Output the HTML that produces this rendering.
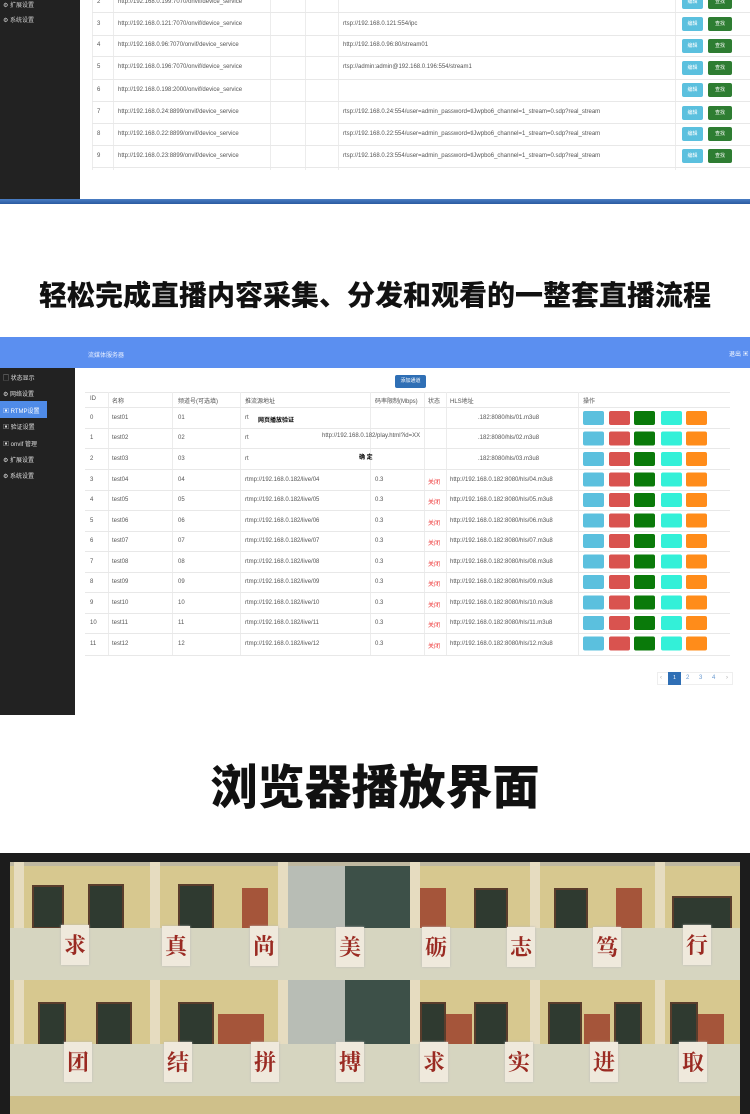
<!DOCTYPE html>
<html><head><meta charset="utf-8"><style>
*{margin:0;padding:0;box-sizing:border-box}
body{width:750px;height:1114px;overflow:hidden;background:#fff;font-family:"Liberation Sans","Noto Sans CJK SC",sans-serif;position:relative}
.a{position:absolute}
.t{position:absolute;font-size:6px;color:#555;white-space:nowrap}
.hl{position:absolute;height:1px;background:#e8e8e8}
.vl{position:absolute;width:1px;background:#ececec}
.b{position:absolute;height:14px;border-radius:2px;font-size:5px;color:#fff;text-align:center;line-height:14px}
h2{position:absolute;left:0;width:750px;text-align:center;font-family:"Liberation Sans","Noto Sans CJK SC",sans-serif;font-weight:900;color:#111}
.ch{position:absolute;width:28px;height:40px;background:#efe9dc;color:#9a2a22;font-size:22px;font-weight:bold;text-align:center;line-height:40px;font-family:"Noto Serif CJK SC",serif;box-shadow:0 0 2px #bbb}
.win{position:absolute;background:#2f3a30;border:2px solid #5a3d2c}
.door{position:absolute;background:#a5553a}
.pil{position:absolute;width:10px;background:#e6dcc0}
</style></head><body>
<!-- Section 1 -->
<div class="a" style="left:0;top:0;width:80px;height:200px;background:#222"></div>
<div class="t" style="left:3px;top:0;color:#ccc">⚙ 扩展设置</div>
<div class="t" style="left:3px;top:15px;color:#ccc">⚙ 系统设置</div>
<div class="vl" style="left:92px;top:0;height:170px"></div>
<div class="vl" style="left:113px;top:0;height:170px"></div>
<div class="vl" style="left:270px;top:0;height:170px"></div>
<div class="vl" style="left:305px;top:0;height:170px"></div>
<div class="vl" style="left:338px;top:0;height:170px"></div>
<div class="vl" style="left:675px;top:0;height:170px"></div>
<div class="hl" style="left:92px;width:658px;top:12px"></div>
<div class="hl" style="left:92px;width:658px;top:35px"></div>
<div class="hl" style="left:92px;width:658px;top:56px"></div>
<div class="hl" style="left:92px;width:658px;top:79px"></div>
<div class="hl" style="left:92px;width:658px;top:101px"></div>
<div class="hl" style="left:92px;width:658px;top:123px"></div>
<div class="hl" style="left:92px;width:658px;top:145px"></div>
<div class="hl" style="left:92px;width:658px;top:167px"></div>

<div class="t" style="left:97px;top:-1px">2</div><div class="t" style="left:118px;top:-1px">http://192.168.0.199:7070/onvif/device_service</div>
<div class="t" style="left:97px;top:21px">3</div><div class="t" style="left:118px;top:21px">http://192.168.0.121:7070/onvif/device_service</div><div class="t" style="left:343px;top:21px">rtsp://192.168.0.121:554/ipc</div>
<div class="t" style="left:97px;top:42px">4</div><div class="t" style="left:118px;top:42px">http://192.168.0.96:7070/onvif/device_service</div><div class="t" style="left:343px;top:42px">http://192.168.0.96:80/stream01</div>
<div class="t" style="left:97px;top:64px">5</div><div class="t" style="left:118px;top:64px">http://192.168.0.196:7070/onvif/device_service</div><div class="t" style="left:343px;top:64px">rtsp://admin:admin@192.168.0.196:554/stream1</div>
<div class="t" style="left:97px;top:87px">6</div><div class="t" style="left:118px;top:87px">http://192.168.0.198:2000/onvif/device_service</div>
<div class="t" style="left:97px;top:109px">7</div><div class="t" style="left:118px;top:109px">http://192.168.0.24:8899/onvif/device_service</div><div class="t" style="left:343px;top:109px">rtsp://192.168.0.24:554/user=admin_password=tlJwpbo6_channel=1_stream=0.sdp?real_stream</div>
<div class="t" style="left:97px;top:131px">8</div><div class="t" style="left:118px;top:131px">http://192.168.0.22:8899/onvif/device_service</div><div class="t" style="left:343px;top:131px">rtsp://192.168.0.22:554/user=admin_password=tlJwpbo6_channel=1_stream=0.sdp?real_stream</div>
<div class="t" style="left:97px;top:153px">9</div><div class="t" style="left:118px;top:153px">http://192.168.0.23:8899/onvif/device_service</div><div class="t" style="left:343px;top:153px">rtsp://192.168.0.23:554/user=admin_password=tlJwpbo6_channel=1_stream=0.sdp?real_stream</div>

<div class="b" style="left:682px;top:-5px;width:21px;background:#5bc0de">编辑</div><div class="b" style="left:708px;top:-5px;width:24px;background:#2e7d32">查找</div>
<div class="b" style="left:682px;top:17px;width:21px;background:#5bc0de">编辑</div><div class="b" style="left:708px;top:17px;width:24px;background:#2e7d32">查找</div>
<div class="b" style="left:682px;top:39px;width:21px;background:#5bc0de">编辑</div><div class="b" style="left:708px;top:39px;width:24px;background:#2e7d32">查找</div>
<div class="b" style="left:682px;top:61px;width:21px;background:#5bc0de">编辑</div><div class="b" style="left:708px;top:61px;width:24px;background:#2e7d32">查找</div>
<div class="b" style="left:682px;top:83px;width:21px;background:#5bc0de">编辑</div><div class="b" style="left:708px;top:83px;width:24px;background:#2e7d32">查找</div>
<div class="b" style="left:682px;top:106px;width:21px;background:#5bc0de">编辑</div><div class="b" style="left:708px;top:106px;width:24px;background:#2e7d32">查找</div>
<div class="b" style="left:682px;top:127px;width:21px;background:#5bc0de">编辑</div><div class="b" style="left:708px;top:127px;width:24px;background:#2e7d32">查找</div>
<div class="b" style="left:682px;top:149px;width:21px;background:#5bc0de">编辑</div><div class="b" style="left:708px;top:149px;width:24px;background:#2e7d32">查找</div>
<div class="a" style="left:0;top:199px;width:750px;height:5px;background:linear-gradient(#4a7ec4,#2a5aa0)"></div>

<h2 style="top:278px;font-size:28px;line-height:36px">轻松完成直播内容采集、分发和观看的一整套直播流程</h2>

<!-- Section 2 -->
<div class="a" style="left:0;top:337px;width:750px;height:31px;background:#5b8ff0"></div>
<div class="t" style="left:88px;top:350px;color:#e8efff">流媒体服务器</div>
<div class="t" style="left:729px;top:349px;color:#fff">退出 ▣</div>
<div class="a" style="left:0;top:368px;width:75px;height:347px;background:#222"></div>
<div class="a" style="left:0;top:401px;width:47px;height:17px;background:#4f8be8"></div>
<div class="t" style="left:3px;top:373px;color:#ddd">▢ 状态显示</div>
<div class="t" style="left:3px;top:389px;color:#ddd">⚙ 网络设置</div>
<div class="t" style="left:3px;top:406px;color:#fff">▣ RTMP设置</div>
<div class="t" style="left:3px;top:422px;color:#ddd">▣ 验证设置</div>
<div class="t" style="left:3px;top:439px;color:#ddd">▣ onvif 管理</div>
<div class="t" style="left:3px;top:455px;color:#ddd">⚙ 扩展设置</div>
<div class="t" style="left:3px;top:471px;color:#ddd">⚙ 系统设置</div>
<div class="b" style="left:395px;top:375px;width:31px;height:13px;line-height:13px;background:#2f6fb5">添加通道</div>
<div class="hl" style="left:85px;width:645px;top:392px"></div>
<div class="t" style="left:90px;top:396px">ID</div><div class="t" style="left:112px;top:396px">名称</div><div class="t" style="left:178px;top:396px">频道号(可选填)</div><div class="t" style="left:245px;top:396px">推流源地址</div><div class="t" style="left:375px;top:396px">码率限制(Mbps)</div><div class="t" style="left:428px;top:396px">状态</div><div class="t" style="left:450px;top:396px">HLS地址</div><div class="t" style="left:583px;top:396px">操作</div>
<div class="vl" style="left:108px;top:392px;height:264px"></div>
<div class="vl" style="left:172px;top:392px;height:264px"></div>
<div class="vl" style="left:240px;top:392px;height:264px"></div>
<div class="vl" style="left:370px;top:392px;height:264px"></div>
<div class="vl" style="left:424px;top:392px;height:264px"></div>
<div class="vl" style="left:446px;top:392px;height:264px"></div>
<div class="vl" style="left:578px;top:392px;height:264px"></div>

<div class="hl" style="left:85px;width:645px;top:407px"></div>
<div class="t" style="left:90px;top:415px">0</div><div class="t" style="left:112px;top:415px">test01</div><div class="t" style="left:178px;top:415px">01</div><div class="t" style="left:245px;top:415px">rt</div><div class="t" style="left:258px;top:415px;color:#000;font-weight:bold">网页播放验证</div><div class="t" style="left:478px;top:415px">.182:8080/hls/01.m3u8</div>
<div class="hl" style="left:85px;width:645px;top:428px"></div>
<div class="t" style="left:90px;top:435px">1</div><div class="t" style="left:112px;top:435px">test02</div><div class="t" style="left:178px;top:435px">02</div><div class="t" style="left:245px;top:435px">rt</div><div class="t" style="left:322px;top:433px">http://192.168.0.182/play.html?id=XX</div><div class="t" style="left:478px;top:435px">.182:8080/hls/02.m3u8</div>
<div class="hl" style="left:85px;width:645px;top:448px"></div>
<div class="t" style="left:90px;top:456px">2</div><div class="t" style="left:112px;top:456px">test03</div><div class="t" style="left:178px;top:456px">03</div><div class="t" style="left:245px;top:456px">rt</div><div class="t" style="left:359px;top:452px;color:#000;font-weight:bold">确 定</div><div class="t" style="left:478px;top:456px">.182:8080/hls/03.m3u8</div>
<div class="hl" style="left:85px;width:645px;top:469px"></div>

<div class="t" style="left:90px;top:477px">3</div><div class="t" style="left:112px;top:477px">test04</div><div class="t" style="left:178px;top:477px">04</div><div class="t" style="left:245px;top:477px">rtmp://192.168.0.182/live/04</div><div class="t" style="left:375px;top:477px">0.3</div><div class="t" style="left:428px;top:477px;color:#e33">关闭</div><div class="t" style="left:450px;top:477px">http://192.168.0.182:8080/hls/04.m3u8</div>
<div class="hl" style="left:85px;width:645px;top:490px"></div>
<div class="t" style="left:90px;top:497px">4</div><div class="t" style="left:112px;top:497px">test05</div><div class="t" style="left:178px;top:497px">05</div><div class="t" style="left:245px;top:497px">rtmp://192.168.0.182/live/05</div><div class="t" style="left:375px;top:497px">0.3</div><div class="t" style="left:428px;top:497px;color:#e33">关闭</div><div class="t" style="left:450px;top:497px">http://192.168.0.182:8080/hls/05.m3u8</div>
<div class="hl" style="left:85px;width:645px;top:510px"></div>
<div class="t" style="left:90px;top:518px">5</div><div class="t" style="left:112px;top:518px">test06</div><div class="t" style="left:178px;top:518px">06</div><div class="t" style="left:245px;top:518px">rtmp://192.168.0.182/live/06</div><div class="t" style="left:375px;top:518px">0.3</div><div class="t" style="left:428px;top:518px;color:#e33">关闭</div><div class="t" style="left:450px;top:518px">http://192.168.0.182:8080/hls/06.m3u8</div>
<div class="hl" style="left:85px;width:645px;top:531px"></div>
<div class="t" style="left:90px;top:538px">6</div><div class="t" style="left:112px;top:538px">test07</div><div class="t" style="left:178px;top:538px">07</div><div class="t" style="left:245px;top:538px">rtmp://192.168.0.182/live/07</div><div class="t" style="left:375px;top:538px">0.3</div><div class="t" style="left:428px;top:538px;color:#e33">关闭</div><div class="t" style="left:450px;top:538px">http://192.168.0.182:8080/hls/07.m3u8</div>
<div class="hl" style="left:85px;width:645px;top:551px"></div>
<div class="t" style="left:90px;top:559px">7</div><div class="t" style="left:112px;top:559px">test08</div><div class="t" style="left:178px;top:559px">08</div><div class="t" style="left:245px;top:559px">rtmp://192.168.0.182/live/08</div><div class="t" style="left:375px;top:559px">0.3</div><div class="t" style="left:428px;top:559px;color:#e33">关闭</div><div class="t" style="left:450px;top:559px">http://192.168.0.182:8080/hls/08.m3u8</div>
<div class="hl" style="left:85px;width:645px;top:572px"></div>
<div class="t" style="left:90px;top:579px">8</div><div class="t" style="left:112px;top:579px">test09</div><div class="t" style="left:178px;top:579px">09</div><div class="t" style="left:245px;top:579px">rtmp://192.168.0.182/live/09</div><div class="t" style="left:375px;top:579px">0.3</div><div class="t" style="left:428px;top:579px;color:#e33">关闭</div><div class="t" style="left:450px;top:579px">http://192.168.0.182:8080/hls/09.m3u8</div>
<div class="hl" style="left:85px;width:645px;top:592px"></div>
<div class="t" style="left:90px;top:600px">9</div><div class="t" style="left:112px;top:600px">test10</div><div class="t" style="left:178px;top:600px">10</div><div class="t" style="left:245px;top:600px">rtmp://192.168.0.182/live/10</div><div class="t" style="left:375px;top:600px">0.3</div><div class="t" style="left:428px;top:600px;color:#e33">关闭</div><div class="t" style="left:450px;top:600px">http://192.168.0.182:8080/hls/10.m3u8</div>
<div class="hl" style="left:85px;width:645px;top:613px"></div>
<div class="t" style="left:90px;top:620px">10</div><div class="t" style="left:112px;top:620px">test11</div><div class="t" style="left:178px;top:620px">11</div><div class="t" style="left:245px;top:620px">rtmp://192.168.0.182/live/11</div><div class="t" style="left:375px;top:620px">0.3</div><div class="t" style="left:428px;top:620px;color:#e33">关闭</div><div class="t" style="left:450px;top:620px">http://192.168.0.182:8080/hls/11.m3u8</div>
<div class="hl" style="left:85px;width:645px;top:633px"></div>
<div class="t" style="left:90px;top:641px">11</div><div class="t" style="left:112px;top:641px">test12</div><div class="t" style="left:178px;top:641px">12</div><div class="t" style="left:245px;top:641px">rtmp://192.168.0.182/live/12</div><div class="t" style="left:375px;top:641px">0.3</div><div class="t" style="left:428px;top:641px;color:#e33">关闭</div><div class="t" style="left:450px;top:641px">http://192.168.0.182:8080/hls/12.m3u8</div>
<div class="hl" style="left:85px;width:645px;top:655px"></div>

<svg class="a" style="left:583px;top:411px" width="125" height="242">
<defs><g id="r">
<rect x="0" y="0" width="21" height="14" rx="2" fill="#5bc0de"/>
<rect x="26" y="0" width="21" height="14" rx="2" fill="#d9534f"/>
<rect x="51" y="0" width="21" height="14" rx="2" fill="#0a7a0a"/>
<rect x="78" y="0" width="21" height="14" rx="2" fill="#33f0d8"/>
<rect x="103" y="0" width="21" height="14" rx="2" fill="#ff8c1a"/>
</g></defs>
<use href="#r" y="0"/><use href="#r" y="20.5"/><use href="#r" y="41"/><use href="#r" y="61.5"/><use href="#r" y="82"/><use href="#r" y="102.5"/><use href="#r" y="123"/><use href="#r" y="143.5"/><use href="#r" y="164"/><use href="#r" y="184.5"/><use href="#r" y="205"/><use href="#r" y="225.5"/>
</svg>
<!-- pagination -->
<div class="a" style="left:657px;top:672px;width:76px;height:13px;border:1px solid #eee"></div>
<div class="b" style="left:668px;top:672px;width:13px;height:13px;line-height:13px;background:#2f6fb5;border-radius:0">1</div>
<div class="t" style="left:660px;top:675px;color:#aaa">‹</div><div class="t" style="left:686px;top:675px;color:#6a9ad0">2</div><div class="t" style="left:699px;top:675px;color:#6a9ad0">3</div><div class="t" style="left:712px;top:675px;color:#6a9ad0">4</div><div class="t" style="left:726px;top:675px;color:#aaa">›</div>

<h2 style="top:760px;font-size:47px;line-height:56px">浏览器播放界面</h2>

<!-- Section 3 photo -->
<div class="a" style="left:0;top:853px;width:750px;height:261px;background:#1c1c1c"></div>
<div class="a" style="left:10px;top:862px;width:730px;height:252px;background:#d7c88f;overflow:hidden">
  <div class="a" style="left:278px;top:0;width:125px;height:252px;background:#b8bdb5"></div>
  <div class="a" style="left:335px;top:0;width:68px;height:252px;background:#3d5048"></div>
  <div class="a" style="left:0;top:0;width:730px;height:4px;background:#bfb8a0"></div>
  <div class="pil" style="left:4px;top:0;height:252px"></div>
  <div class="pil" style="left:140px;top:0;height:252px"></div>
  <div class="pil" style="left:268px;top:0;height:252px"></div>
  <div class="pil" style="left:400px;top:0;height:252px"></div>
  <div class="pil" style="left:520px;top:0;height:252px"></div>
  <div class="pil" style="left:645px;top:0;height:252px"></div>
  <div class="win" style="left:22px;top:23px;width:32px;height:44px"></div>
  <div class="win" style="left:78px;top:22px;width:36px;height:46px"></div>
  <div class="win" style="left:168px;top:22px;width:36px;height:46px"></div>
  <div class="door" style="left:232px;top:26px;width:26px;height:42px"></div>
  <div class="door" style="left:410px;top:26px;width:26px;height:42px"></div>
  <div class="win" style="left:464px;top:26px;width:34px;height:44px"></div>
  <div class="win" style="left:544px;top:26px;width:34px;height:44px"></div>
  <div class="door" style="left:606px;top:26px;width:26px;height:42px"></div>
  <div class="win" style="left:662px;top:34px;width:60px;height:36px"></div>
  <div class="a" style="left:0;top:66px;width:730px;height:52px;background:#d6d5c0"></div>
  <div class="win" style="left:28px;top:140px;width:28px;height:44px"></div>
  <div class="win" style="left:86px;top:140px;width:36px;height:44px"></div>
  <div class="win" style="left:168px;top:140px;width:36px;height:44px"></div>
  <div class="door" style="left:208px;top:152px;width:46px;height:34px"></div>
  <div class="win" style="left:410px;top:140px;width:26px;height:44px"></div>
  <div class="door" style="left:436px;top:152px;width:26px;height:34px"></div>
  <div class="win" style="left:464px;top:140px;width:34px;height:44px"></div>
  <div class="win" style="left:538px;top:140px;width:34px;height:44px"></div>
  <div class="door" style="left:574px;top:152px;width:26px;height:34px"></div>
  <div class="win" style="left:604px;top:140px;width:28px;height:44px"></div>
  <div class="win" style="left:660px;top:140px;width:28px;height:44px"></div>
  <div class="door" style="left:688px;top:152px;width:26px;height:34px"></div>
  <div class="a" style="left:0;top:182px;width:730px;height:52px;background:#d6d5c0"></div>
  <div class="a" style="left:0;top:234px;width:730px;height:18px;background:#cfc08a"></div>
</div>
<div class="ch" style="left:61px;top:925px">求</div>
<div class="ch" style="left:162px;top:926px">真</div>
<div class="ch" style="left:250px;top:926px">尚</div>
<div class="ch" style="left:336px;top:927px">美</div>
<div class="ch" style="left:422px;top:927px">砺</div>
<div class="ch" style="left:507px;top:927px">志</div>
<div class="ch" style="left:593px;top:927px">笃</div>
<div class="ch" style="left:683px;top:925px">行</div>
<div class="ch" style="left:64px;top:1042px">团</div>
<div class="ch" style="left:164px;top:1042px">结</div>
<div class="ch" style="left:251px;top:1042px">拼</div>
<div class="ch" style="left:336px;top:1042px">搏</div>
<div class="ch" style="left:420px;top:1042px">求</div>
<div class="ch" style="left:505px;top:1042px">实</div>
<div class="ch" style="left:590px;top:1042px">进</div>
<div class="ch" style="left:679px;top:1042px">取</div>
</body></html>
